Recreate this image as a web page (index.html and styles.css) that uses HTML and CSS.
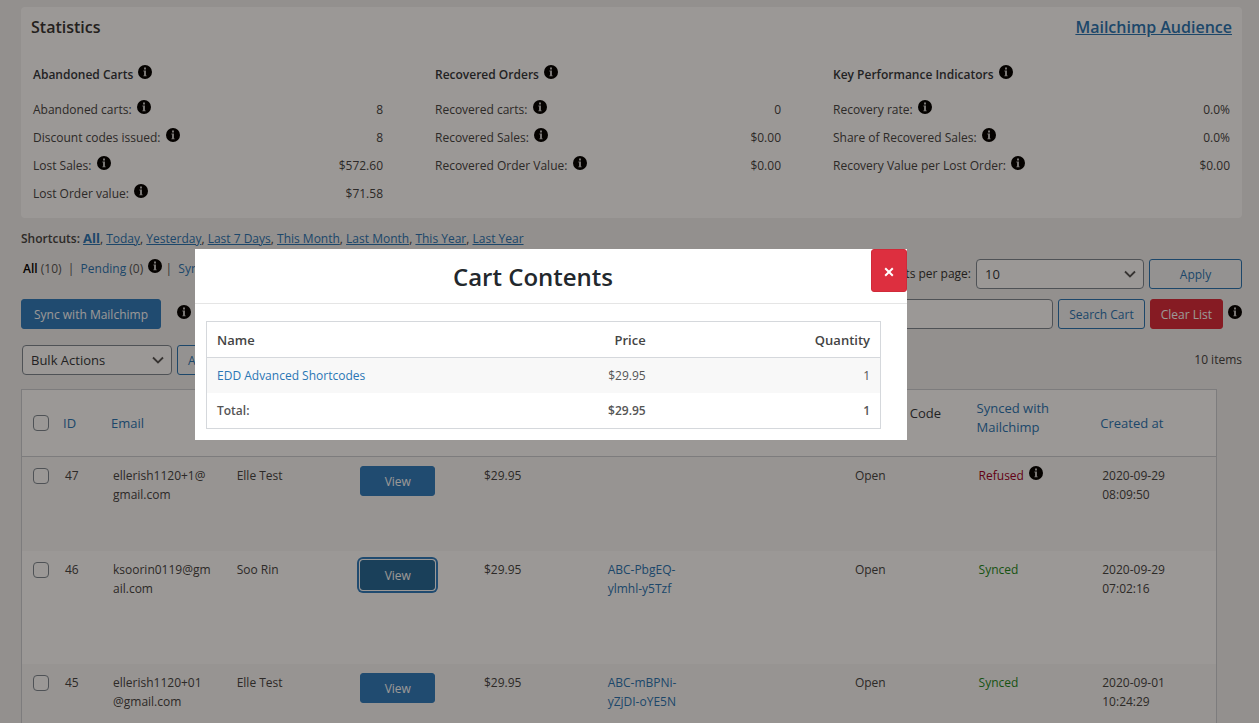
FILE: index.html
```html
<!DOCTYPE html>
<html lang="en">
<head>
  <meta charset="UTF-8" />
  <meta name="viewport" content="width=device-width, initial-scale=1.0"/>
  <title>Abandoned Carts</title>
  <link rel="stylesheet" href="styles.css">
</head>
<body>

<svg class="sprite" aria-hidden="true">
  <symbol id="info" viewBox="0 0 14 14">
    <circle cx="7" cy="7" r="7" fill="#000"/>
    <path d="M6 2.6h2v1.8H6zM5.4 5.5H8v4.9h.7v.9H5.3v-.9H6V6.4h-.6z" fill="#c4c4c4"/>
  </symbol>
</svg>

<div class="wrap">

  <section class="stats">
    <div class="stats-head">
      <h2>Statistics</h2>
      <a href="#">Mailchimp Audience</a>
    </div>
    <div class="stats-cols">
      <div>
        <h3>Abandoned Carts <svg class="info"><use href="#info"/></svg></h3>
        <dl>
          <div><dt>Abandoned carts: <svg class="info"><use href="#info"/></svg></dt><dd>8</dd></div>
          <div><dt>Discount codes issued: <svg class="info"><use href="#info"/></svg></dt><dd>8</dd></div>
          <div><dt>Lost Sales: <svg class="info"><use href="#info"/></svg></dt><dd>$572.60</dd></div>
          <div><dt>Lost Order value: <svg class="info"><use href="#info"/></svg></dt><dd>$71.58</dd></div>
        </dl>
      </div>
      <div>
        <h3>Recovered Orders <svg class="info"><use href="#info"/></svg></h3>
        <dl>
          <div><dt>Recovered carts: <svg class="info"><use href="#info"/></svg></dt><dd>0</dd></div>
          <div><dt>Recovered Sales: <svg class="info"><use href="#info"/></svg></dt><dd>$0.00</dd></div>
          <div><dt>Recovered Order Value: <svg class="info"><use href="#info"/></svg></dt><dd>$0.00</dd></div>
        </dl>
      </div>
      <div>
        <h3>Key Performance Indicators <svg class="info"><use href="#info"/></svg></h3>
        <dl>
          <div><dt>Recovery rate: <svg class="info"><use href="#info"/></svg></dt><dd>0.0%</dd></div>
          <div><dt>Share of Recovered Sales: <svg class="info"><use href="#info"/></svg></dt><dd>0.0%</dd></div>
          <div><dt>Recovery Value per Lost Order: <svg class="info"><use href="#info"/></svg></dt><dd>$0.00</dd></div>
        </dl>
      </div>
    </div>
  </section>

  <div class="shortcuts">
    <strong>Shortcuts:</strong>
    <a href="#" class="current">All</a>, <a href="#">Today</a>, <a href="#">Yesterday</a>, <a href="#">Last 7 Days</a>, <a href="#">This Month</a>, <a href="#">Last Month</a>, <a href="#">This Year</a>, <a href="#">Last Year</a>
  </div>

  <div class="bar">
    <div class="filters">
      <a href="#" class="current">All</a> (10) &nbsp;|&nbsp; <a href="#">Pending</a> (0) <svg class="info"><use href="#info"/></svg> | &nbsp;<a href="#">Synced</a>
    </div>
    <div class="group">
      <label for="perPage">Carts per page:</label>
      <select id="perPage" class="per-page">
        <option>10</option>
        <option>20</option>
        <option>50</option>
      </select>
      <button type="button" class="btn apply">Apply</button>
    </div>
  </div>

  <div class="bar">
    <div class="group sync">
      <button type="button" class="btn primary">Sync with Mailchimp</button>
      <svg class="info"><use href="#info"/></svg>
    </div>
    <div class="group">
      <input type="search" class="search" aria-label="Search Cart">
      <button type="button" class="btn">Search Cart</button>
      <button type="button" class="btn danger">Clear List</button>
      <svg class="info"><use href="#info"/></svg>
    </div>
  </div>

  <div class="bar bulk-bar">
    <div class="group bulk">
      <select aria-label="Bulk actions">
        <option>Bulk Actions</option>
        <option>Delete</option>
      </select>
      <button type="button" class="btn">Apply</button>
    </div>
    <span class="count">10 items</span>
  </div>

  <table class="carts">
    <colgroup>
      <col class="col-check"><col class="col-id"><col span="9">
    </colgroup>
    <thead>
      <tr>
        <th class="check"><input type="checkbox" aria-label="Select all"></th>
        <th><a href="#">ID</a></th>
        <th><a href="#">Email</a></th>
        <th></th>
        <th></th>
        <th></th>
        <th></th>
        <th></th>
        <th>Discount Code Status</th>
        <th class="sorted"><a href="#">Synced with Mailchimp</a></th>
        <th><a href="#">Created at</a></th>
      </tr>
    </thead>
    <tbody>
      <tr>
        <td class="check"><input type="checkbox" aria-label="Select cart 47"></td>
        <td>47</td>
        <td>ellerish1120+1@<br>gmail.com</td>
        <td>Elle Test</td>
        <td><button type="button" class="btn primary view">View</button></td>
        <td>$29.95</td>
        <td></td>
        <td></td>
        <td>Open</td>
        <td><span class="refused">Refused</span> <svg class="info"><use href="#info"/></svg></td>
        <td>2020-09-29<br>08:09:50</td>
      </tr>
      <tr class="tall">
        <td class="check"><input type="checkbox" aria-label="Select cart 46"></td>
        <td>46</td>
        <td>ksoorin0119@gm<br>ail.com</td>
        <td>Soo Rin</td>
        <td><button type="button" class="btn primary view focused">View</button></td>
        <td>$29.95</td>
        <td><a href="#">ABC-PbgEQ-<br>ylmhl-y5Tzf</a></td>
        <td></td>
        <td>Open</td>
        <td><span class="synced">Synced</span></td>
        <td>2020-09-29<br>07:02:16</td>
      </tr>
      <tr class="tall">
        <td class="check"><input type="checkbox" aria-label="Select cart 45"></td>
        <td>45</td>
        <td>ellerish1120+01<br>@gmail.com</td>
        <td>Elle Test</td>
        <td><button type="button" class="btn primary view">View</button></td>
        <td>$29.95</td>
        <td><a href="#">ABC-mBPNi-<br>yZjDI-oYE5N</a></td>
        <td></td>
        <td>Open</td>
        <td><span class="synced">Synced</span></td>
        <td>2020-09-01<br>10:24:29</td>
      </tr>
    </tbody>
  </table>
</div>

<div class="overlay">
  <div class="modal" role="dialog" aria-labelledby="modalTitle">
    <div class="modal-head">
      <h1 id="modalTitle">Cart Contents</h1>
      <button type="button" class="close" aria-label="Close">
        <svg viewBox="0 0 10 10"><path d="M1.2 1.2l7.6 7.6M8.8 1.2L1.2 8.8"/></svg>
      </button>
    </div>
    <div class="modal-body">
      <table class="contents">
        <thead>
          <tr><th>Name</th><th>Price</th><th>Quantity</th></tr>
        </thead>
        <tbody>
          <tr><td><a href="#">EDD Advanced Shortcodes</a></td><td>$29.95</td><td>1</td></tr>
        </tbody>
        <tfoot>
          <tr><td>Total:</td><td>$29.95</td><td>1</td></tr>
        </tfoot>
      </table>
    </div>
  </div>
</div>

</body>
</html>
```
FILE: styles.css
```css
* {
  box-sizing: border-box;
}

body {
  margin: 0;
  background: #f1f1f1;
  color: #444;
  font-family: "Open Sans", sans-serif;
  font-size: 12px;
  line-height: 20px;
  overflow: hidden;
}

a {
  color: #2a76b5;
  text-decoration: none;
}

h1, h2, h3, dl, dd {
  margin: 0;
}

.sprite {
  display: none;
}

.info {
  width: 14px;
  height: 14px;
  vertical-align: -1px;
  margin: 0 0 1px 2px;
  flex: none;
}

.wrap {
  padding: 7px 17px 0 21px;
}

/* statistics */
.stats {
  background: #fff;
  border-radius: 4px;
  padding: 10px;
}

.stats-head {
  display: flex;
  justify-content: space-between;
  margin-bottom: 24px;
}

.stats-head h2,
.stats-head a {
  font-size: 16px;
  font-weight: 600;
}

.stats-head h2 {
  color: #333;
}

.stats-head a {
  text-decoration: underline;
}

.stats-cols {
  display: grid;
  grid-template-columns: 350fr 346fr 397fr;
  gap: 52px;
  padding: 0 2px;
}

.stats h3 {
  font-size: 12px;
  font-weight: 600;
  line-height: 28px;
  margin-bottom: 7px;
  color: #32373c;
}

.stats dl div {
  display: flex;
  justify-content: space-between;
  height: 28px;
  line-height: 28px;
}

/* toolbars */
.shortcuts {
  margin-top: 10px;
}

.shortcuts a {
  text-decoration: underline;
}

.shortcuts strong {
  font-weight: 600;
}

.shortcuts .current {
  font-size: 13px;
  font-weight: 700;
}

.bar {
  display: flex;
  justify-content: space-between;
  align-items: center;
  margin-top: 10px;
}

.filters {
  align-self: flex-start;
  padding-left: 2px;
  color: #555;
}

.filters .current {
  color: #000;
  font-weight: 600;
}

.group {
  display: flex;
  align-items: center;
  gap: 5px;
}

.group .info {
  margin: 0 0 4px;
}

.group label {
  color: #333;
}

.sync {
  gap: 16px;
}

.sync .btn {
  width: 140px;
}

.bulk-bar {
  margin-top: 16px;
}

.bulk {
  padding-left: 1px;
}

select,
input[type="search"] {
  height: 30px;
  border: 1px solid #7e8993;
  border-radius: 4px;
  background: #fff;
  color: #32373c;
  font-family: inherit;
  font-size: 13px;
}

select {
  width: 150px;
  padding: 0 24px 0 8px;
  appearance: none;
  background: #fff url("data:image/svg+xml,%3Csvg xmlns='http://www.w3.org/2000/svg' viewBox='0 0 12 12'%3E%3Cpath d='M1 3.5l5 5 5-5' fill='none' stroke='%23555' stroke-width='1.8'/%3E%3C/svg%3E") no-repeat right 7px center / 12px 12px;
}

.per-page {
  width: 168px;
}

.search {
  width: 240px;
}

.btn {
  height: 30px;
  padding: 0 10px;
  border: 1px solid #2a76b5;
  border-radius: 3px;
  background: #f3f5f6;
  color: #2a76b5;
  font-family: inherit;
  font-size: 12px;
  white-space: nowrap;
}

.apply {
  width: 93px;
}

.primary {
  background: #2e7cbf;
  border-color: #2e7cbf;
  color: #fff;
}

.danger {
  background: #dc2c3c;
  border-color: #dc2c3c;
  color: #fff;
}

.view {
  width: 75px;
}

.focused {
  background: #256a99;
  border-color: #256a99;
  box-shadow: 0 0 0 1px #fff, 0 0 0 3px #2e7cbf;
}

/* carts table */
.carts {
  width: calc(100% - 25px);
  margin-top: 14px;
  table-layout: fixed;
  border: 1px solid #ccd0d4;
  border-spacing: 0;
  background: #fff;
  line-height: 19px;
}

.col-check {
  width: 33px;
}

.col-id {
  width: 48px;
}

.carts th {
  height: 67px;
  padding: 8px;
  border-bottom: 1px solid #ccd0d4;
  font-size: 13px;
  font-weight: 400;
  text-align: left;
  color: #32373c;
}

.carts .sorted {
  padding-bottom: 18px;
}

.carts td {
  height: 94px;
  padding: 9px 10px;
  vertical-align: top;
}

.carts .tall td {
  height: 113px;
}

.carts tbody tr:nth-child(odd) {
  background: #f9f9f9;
}

.carts .check {
  padding: 11px 0 11px 11px;
}

.carts input {
  display: block;
  width: 16px;
  height: 16px;
  margin: 0;
  appearance: none;
  border: 1px solid #7e8993;
  border-radius: 4px;
  background: #fff;
}

.refused {
  color: #a00028;
}

.synced {
  color: #1e8a1e;
}

/* modal */
.overlay {
  position: fixed;
  inset: 0;
  display: flex;
  align-items: flex-start;
  padding: 249px 352px 0 195px;
  background: rgba(11, 6, 0, 0.41);
}

.modal {
  flex: 1;
  background: #fff;
}

.modal-head {
  display: flex;
  height: 55px;
  border-bottom: 1px solid #e5e5e5;
}

.modal-head h1 {
  flex: 1;
  font-size: 24px;
  font-weight: 600;
  line-height: 55px;
  text-align: center;
  color: #23282d;
}

.close {
  width: 36px;
  height: 43px;
  padding: 4px 0 0;
  border: 1px solid #d02a39;
  border-radius: 3px;
  background: #dd2f3f;
}

.close svg {
  width: 10px;
  height: 10px;
  fill: none;
  stroke: #fff;
  stroke-width: 2;
}

.modal-body {
  padding: 17px 26px 11px 11px;
}

.contents {
  width: 100%;
  border: 1px solid #d5d8dc;
  border-spacing: 0;
  table-layout: fixed;
  color: #555;
}

.contents th,
.contents td {
  height: 35px;
  padding: 0 10px;
  text-align: right;
}

.contents th {
  height: 36px;
  border-bottom: 1px solid #d5d8dc;
  font-size: 13px;
  font-weight: 600;
  color: #444;
}

.contents th:first-child,
.contents td:first-child {
  text-align: left;
}

.contents tbody tr {
  background: #f8f8f8;
}

.contents tfoot {
  font-weight: 600;
}
```
